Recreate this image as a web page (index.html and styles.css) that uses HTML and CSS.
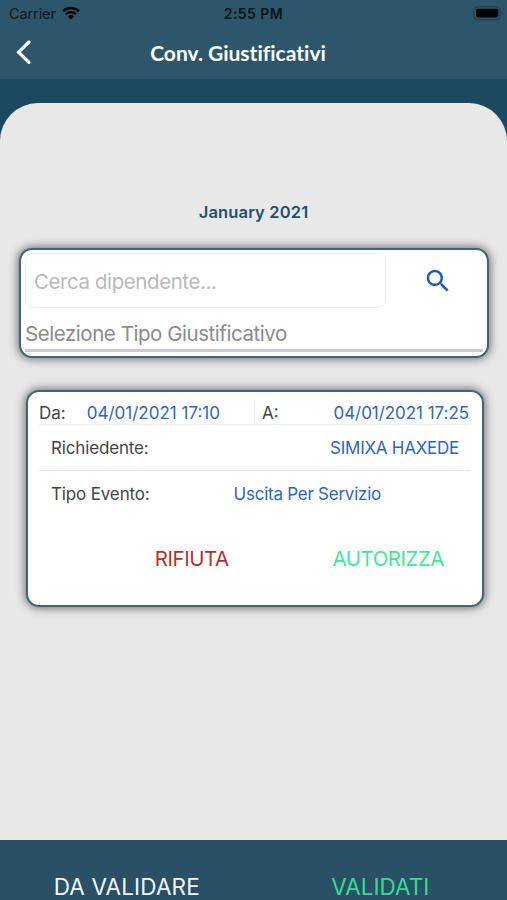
FILE: index.html
```html
<!doctype html>
<html lang="it">

<head>
    <meta charset="utf-8">
    <title>Conv. Giustificativi</title>
    <link rel="stylesheet" href="styles.css">
</head>

<body>
    <header class="header">
        <div class="statusBar">
            <div class="carrier">
                <span class="carrierName">Carrier</span>
                <svg class="wifi" width="18" height="14" viewBox="0 0 18 14">
                    <path d="M1 5.2 A11.6 11.6 0 0 1 17 5.2" fill="none" stroke="#000" stroke-width="2.3"/>
                    <path d="M3.8 8.1 A7.6 7.6 0 0 1 14.2 8.1" fill="none" stroke="#000" stroke-width="2.2"/>
                    <path d="M9 13.4 L5.9 10.4 A4.4 4.4 0 0 1 12.1 10.4 Z"/>
                </svg>
            </div>
            <span class="time">2:55 PM</span>
            <svg class="battery" width="31" height="15" viewBox="0 0 31 15">
                <rect x=".8" y=".8" width="26.4" height="12.8" rx="4" fill="none" stroke="#1d414f" stroke-width="1.2"/>
                <rect x="3" y="2.8" width="22.2" height="8.8" rx="1.5"/>
                <path d="M28.8 5 Q31 7.1 28.8 9.2 Z" fill="#1d414f"/>
            </svg>
        </div>
        <div class="navBar">
            <svg class="back" width="17" height="26" viewBox="0 0 17 26">
                <path d="M14 3 L3.6 13.2 L14 23.4" fill="none" stroke="#fff" stroke-width="3.2" stroke-linecap="round"/>
            </svg>
            <h1 class="title"><span>Conv. Giustificativi</span></h1>
        </div>
    </header>

    <main class="sheet">
        <div class="month"><span>January 2021</span></div>

        <section class="card searchCard">
            <div class="searchRow">
                <div class="searchInput"><span>Cerca dipendente...</span></div>
                <svg class="searchIcon" width="30" height="30" viewBox="0 0 24 24">
                    <path fill="#1d5bb5" d="M15.5 14h-.79l-.28-.27C15.41 12.59 16 11.11 16 9.5 16 5.91 13.09 3 9.5 3S3 5.91 3 9.5 5.91 16 9.5 16c1.61 0 3.09-.59 4.23-1.57l.27.28v.79l5 4.99L20.49 19l-4.99-5zm-6 0C7.01 14 5 11.99 5 9.5S7.01 5 9.5 5 14 7.01 14 9.5 11.99 14 9.5 14z"/>
                </svg>
            </div>
            <div class="typeSelect"><span>Selezione Tipo Giustificativo</span></div>
        </section>

        <section class="card requestCard">
            <div class="dates">
                <div class="dateCell from">
                    <span>Da:</span>
                    <span class="value dateFrom">04/01/2021 17:10</span>
                </div>
                <div class="dateCell to">
                    <span>A:</span>
                    <span class="value dateTo">04/01/2021 17:25</span>
                </div>
            </div>
            <div class="row applicant">
                <span>Richiedente:</span>
                <span class="value name">SIMIXA HAXEDE</span>
            </div>
            <div class="row event">
                <span>Tipo Evento:</span>
                <span class="value eventName">Uscita Per Servizio</span>
            </div>
            <div class="actions">
                <span class="reject">RIFIUTA</span>
                <span class="accept">AUTORIZZA</span>
            </div>
        </section>
    </main>

    <footer class="tabs">
        <div class="tab toValidate"><span>DA VALIDARE</span></div>
        <div class="tab active"><span>VALIDATI</span></div>
    </footer>
</body>

</html>
```
FILE: styles.css
```css
* {
    margin: 0;
    padding: 0;
    box-sizing: border-box;
}

body {
    height: 900px;
    overflow: hidden;
    display: flex;
    flex-direction: column;
    background-color: #1b4960;
    font: 17px Inter, "Liberation Sans", sans-serif;
    color: #444;
}

span {
    white-space: nowrap;
}

svg {
    display: block;
}

.header {
    height: 79px;
    background-color: #2d566a;
    margin-bottom: 24px;
}

.statusBar {
    height: 27px;
    padding: 0 4px 0 9px;
    display: grid;
    grid-template-columns: 1fr auto 1fr;
    align-items: center;
    color: #0b1a21;
    font-size: 14.5px;
}

.carrier {
    display: flex;
    align-items: center;
    gap: 6px;
}

.carrierName {
    letter-spacing: -.1px;
}

.wifi {
    margin-top: -2px;
}

.time {
    font-weight: 600;
    font-size: 14px;
    letter-spacing: .45px;
    color: #06141b;
    margin-right: 5px;
}

.battery {
    justify-self: end;
    margin-right: -1px;
}

.navBar {
    height: 51px;
    display: grid;
    grid-template-columns: 60px 1fr 60px;
    padding-left: 15px;
    padding-right: 46px;
}

.back {
    margin-top: 12px;
}

.title {
    text-align: center;
    font: bold 21px/51px Lato, sans-serif;
    font-variant-ligatures: none;
    color: #fff;
}

.sheet {
    height: 737px;
    background-color: #e8e8e8;
    border-radius: 38px 38px 0 0;
    padding-top: 96px;
}

.month {
    height: 24px;
    line-height: 26px;
    text-align: center;
    font-weight: 600;
    font-size: 16.5px;
    letter-spacing: .15px;
    color: #23506a;
}

.card {
    background-color: #fff;
    border: solid 2px #3f6678;
    border-radius: 13px;
    box-shadow: 0 0 10px 1px rgba(0, 0, 0, .55);
}

.searchCard {
    width: 470px;
    height: 110px;
    margin: 25px 0 0 19px;
    padding: 3px 4px;
}

.searchRow {
    display: flex;
    align-items: center;
}

.searchInput {
    width: 361px;
    height: 55px;
    border: solid 1px #ececec;
    border-radius: 8px;
    padding-left: 8px;
    line-height: 55px;
    font-size: 20.5px;
    letter-spacing: -.42px;
    color: #b9b9b9;
}

.searchIcon {
    margin-left: 37px;
}

.typeSelect {
    height: 44px;
    border-bottom: solid 3px #cbcbcf;
    line-height: 52px;
    font-size: 20.5px;
    letter-spacing: -.45px;
    color: #8b8b8b;
}

.requestCard {
    width: 458px;
    height: 217px;
    margin: 32px 0 0 26px;
    padding: 8px 11px;
}

.value {
    color: #2f66bb;
}

.dates {
    display: flex;
    height: 25px;
    border-bottom: solid 1px #ededed;
    line-height: 26px;
}

.dateCell {
    display: flex;
    justify-content: space-between;
}

.from {
    width: 216px;
    padding-right: 34px;
    border-right: solid 1px #ededed;
}

.to {
    flex: 1;
    padding-left: 7px;
    padding-right: 2px;
}

.dateTo {
    letter-spacing: -.05px;
}

.row {
    display: flex;
    padding: 0 12px;
    letter-spacing: -.15px;
}

.applicant {
    justify-content: space-between;
    height: 46px;
    border-bottom: solid 1px #e6e6e6;
    line-height: 46px;
}

.name {
    letter-spacing: -.25px;
}

.event {
    gap: 84px;
    line-height: 47px;
}

.eventName {
    letter-spacing: -.25px;
}

.actions {
    display: flex;
    justify-content: flex-end;
    gap: 104px;
    padding-right: 27px;
    padding-top: 26px;
    font-size: 20.5px;
    letter-spacing: -.5px;
    line-height: 30px;
}

.reject {
    color: #b5302c;
}

.accept {
    color: #42e695;
}

.tabs {
    height: 60px;
    display: flex;
    background-color: #295064;
    line-height: 94px;
    font-size: 22.5px;
    color: #f2f6fa;
}

.tab {
    flex: 1;
    text-align: center;
}

.toValidate {
    letter-spacing: .15px;
}

.active {
    color: #37dc94;
}
```
